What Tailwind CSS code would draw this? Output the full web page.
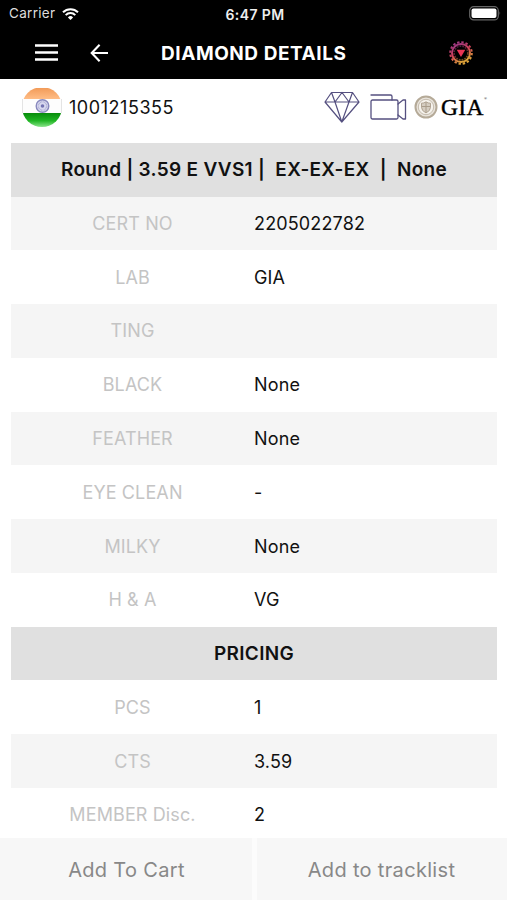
<!doctype html>
<html lang="en">
  <head>
    <title>Diamond Details</title>
    <meta charset="UTF-8" />
    <meta name="viewport" content="width=device-width, initial-scale=1.0" />
    <script src="https://cdn.jsdelivr.net/npm/@tailwindcss/browser@4"></script>
  </head>
  <body class="bg-white font-[Inter,sans-serif] text-[#111]">
    <div class="flex h-[900px] w-[507px] flex-col overflow-hidden">
      <header class="h-[79px] shrink-0 bg-black text-white">
        <!-- status bar -->
        <div class="grid h-[27px] grid-cols-3 items-center pr-[6px] pl-[9px] text-[13px] leading-none">
          <div class="flex items-center gap-[7px]">
            <span class="pt-px text-[13.5px] tracking-[0.3px] text-[#ddd]">Carrier</span>
            <svg class="h-3 w-[17px]" viewBox="0 0 17 12" fill="none" stroke="#fff" stroke-width="2">
              <path d="M1 4.3a10.6 10.6 0 0 1 15 0M3.7 7.1a6.8 6.8 0 0 1 9.6 0" />
              <path d="M8.5 12 5.9 9.4a3.7 3.7 0 0 1 5.2 0z" fill="#fff" stroke="none" />
            </svg>
          </div>
          <span class="pt-[2px] text-center text-[14px] font-semibold tracking-[0.4px] whitespace-nowrap text-[#eee]">6:47 PM</span>
          <svg class="h-[15px] w-8 justify-self-end" viewBox="0 0 32 15">
            <rect x="0.7" y="0.7" width="28.6" height="13.2" rx="4" fill="none" stroke="#666" stroke-width="1.2" />
            <rect x="2.5" y="2.5" width="25" height="9.6" rx="2" fill="#fff" />
            <path d="M30.6 5.3q1.4 2 0 4z" fill="#777" />
          </svg>
        </div>
        <!-- nav bar -->
        <div class="flex h-[51px] items-center pr-[33px] pl-[35px]">
          <svg class="h-[17px] w-[23px]" viewBox="0 0 23 17" stroke="#fff" stroke-width="2.4">
            <path d="M0 1.5h23M0 8.5h23M0 15.5h23" />
          </svg>
          <svg class="ml-8 h-[18px] w-[19px]" viewBox="0 0 19 18" fill="none" stroke="#fff" stroke-width="2.1">
            <path d="M9.6.8 1.7 9l7.9 8.2M1.7 9H18" />
          </svg>
          <h1 class="ml-[52px] pt-[3px] text-[19px] font-bold tracking-[0.55px] whitespace-nowrap">DIAMOND DETAILS</h1>
          <svg class="ml-auto h-[26px] w-[26px]" viewBox="0 0 26 26" fill="none">
            <defs>
              <linearGradient id="ring" x1="0" y1="0" x2="0.5" y2="1">
                <stop stop-color="#8e358d" />
                <stop offset="0.55" stop-color="#d34259" />
                <stop offset="1" stop-color="#dda239" />
              </linearGradient>
            </defs>
            <circle cx="13" cy="13" r="10.8" stroke="url(#ring)" stroke-width="2" stroke-dasharray="2.4 1.84" />
            <circle cx="13" cy="13" r="9" stroke="url(#ring)" stroke-width="2" />
            <circle cx="13" cy="13" r="6.9" stroke="url(#ring)" stroke-width="1.6" stroke-dasharray="1.8 1" opacity="0.5" />
            <path d="M8.7 9.7h8.6L13 17z" fill="#e83655" />
          </svg>
        </div>
      </header>

      <main class="min-h-0 flex-1 overflow-hidden px-[11px]">
        <div class="flex h-[63.8px] items-center pr-[8px] pb-[7px] pl-[11px]">
          <svg class="h-[40px] w-[40px]" viewBox="0 0 40 40">
            <defs>
              <clipPath id="flag"><circle cx="20" cy="20" r="20" /></clipPath>
              <linearGradient id="saffron" x1="0" y1="0" x2="0" y2="1">
                <stop stop-color="#f29b59" />
                <stop offset="1" stop-color="#ffbd86" />
              </linearGradient>
              <linearGradient id="green" x1="0" y1="0" x2="0" y2="1">
                <stop stop-color="#078b0b" />
                <stop offset="0.55" stop-color="#20b524" />
                <stop offset="1" stop-color="#8be58c" />
              </linearGradient>
            </defs>
            <g clip-path="url(#flag)">
              <path d="M0 0h40v40H0z" fill="#fdfdfd" />
              <path d="M0 1h40v11H0z" fill="url(#saffron)" />
              <path d="M0 26h40v14H0z" fill="url(#green)" />
            </g>
            <path d="M.5 12v14M39.5 12v14" stroke="#ddd" stroke-width="0.8" />
            <circle cx="20.5" cy="19" r="6.3" fill="#d9d9ef" stroke="#8989bd" stroke-width="1.4" />
            <circle cx="20.5" cy="19" r="4.2" fill="none" stroke="#aaaad2" stroke-width="1.5" stroke-dasharray="0.7 0.7" />
            <circle cx="20.5" cy="19" r="1.8" fill="#7474b2" />
          </svg>
          <span class="ml-[7px] pt-px text-[18px] tracking-[0.55px]">1001215355</span>
          <div class="ml-auto flex items-center">
            <svg class="h-8 w-9" viewBox="0 0 36 32" fill="none" stroke="#555080" stroke-width="1.2" stroke-linejoin="round">
              <path d="M7.5 1.5h21L35 11 17.8 31 1 11zM1 11h34M7.5 1.5 11 11l7-9.5L25 11l3.5-9.5M11 11l6.8 20L25 11" />
            </svg>
            <svg class="ml-[10px] h-7 w-[37px]" viewBox="0 0 37 28" fill="none" stroke="#555080" stroke-width="1.3" stroke-linejoin="round" stroke-linecap="round">
              <path d="M1 2h19.5q1.5 0 1.5 1.5V7" />
              <rect x="1" y="7" width="27" height="19" rx="1.5" />
              <path d="m28 11 5-4h2.5v19H33l-5-4" />
            </svg>
            <svg class="ml-[7px] h-6 w-6" viewBox="0 0 24 24" fill="none">
              <circle cx="12" cy="12" r="10.5" fill="#e9e4dc" stroke="#b5aa98" stroke-width="2" />
              <circle cx="12" cy="12" r="7.7" fill="#f6f3ed" stroke="#c5bcae" stroke-width="1" />
              <path d="M7.5 8.2q2.2.2 4.5-1.4 2.3 1.6 4.5 1.4v4q0 3.6-4.5 5.8-4.5-2.2-4.5-5.8z" fill="#d5cdc1" stroke="#aa9d8b" stroke-width="0.9" />
              <path d="M12 7v11M8 11.5h8" stroke="#aa9d8b" stroke-width="1" />
            </svg>
            <span class="ml-[3px] flex w-[47px] font-['Liberation_Serif',serif] text-[23.5px] leading-none tracking-[0.4px] text-black [-webkit-text-stroke:0.4px_black]">GIA<span class="pt-px text-[4px] tracking-normal [-webkit-text-stroke:0]">®</span></span>
          </div>
        </div>

        <div class="grid w-[486px] auto-rows-[53.77px] text-[18px] [&>div]:grid [&>div]:grid-cols-2 [&>div]:items-center [&>div>:first-child]:text-center [&>div>:first-child]:tracking-[0.12px] [&>div>:first-child]:text-[#c4c4c4] [&>div>:last-child]:tracking-[0.15px] [&>h2]:flex [&>h2]:items-center [&>h2]:justify-center [&>h2]:bg-[#e0e0e0] [&>h2]:pt-[2px] [&>h2]:text-[19px] [&>h2]:font-semibold [&>h2]:tracking-[0.3px] [&>h2]:whitespace-pre">
          <h2>Round | 3.59 E VVS1 |  EX-EX-EX  |  None</h2>
          <div class="bg-[#f5f5f5]"><span>CERT NO</span><span>2205022782</span></div>
          <div><span>LAB</span><span>GIA</span></div>
          <div class="bg-[#f5f5f5]"><span>TING</span><span></span></div>
          <div><span>BLACK</span><span>None</span></div>
          <div class="bg-[#f5f5f5]"><span>FEATHER</span><span>None</span></div>
          <div><span>EYE CLEAN</span><span>-</span></div>
          <div class="bg-[#f5f5f5]"><span>MILKY</span><span>None</span></div>
          <div><span>H &amp; A</span><span>VG</span></div>
          <h2>PRICING</h2>
          <div><span>PCS</span><span>1</span></div>
          <div class="bg-[#f5f5f5]"><span>CTS</span><span>3.59</span></div>
          <div><span>MEMBER Disc.</span><span>2</span></div>
        </div>
      </main>

      <footer class="grid h-[62px] shrink-0 grid-cols-[252px_1fr] gap-[5px] bg-[#fcfcfc] text-[20px] tracking-[0.32px] text-[#888]">
        <button class="bg-[#f7f7f7] pt-[2px] pl-px">Add To Cart</button>
        <button class="bg-[#f7f7f7] pt-[2px] pr-px">Add to tracklist</button>
      </footer>
    </div>
  </body>
</html>
